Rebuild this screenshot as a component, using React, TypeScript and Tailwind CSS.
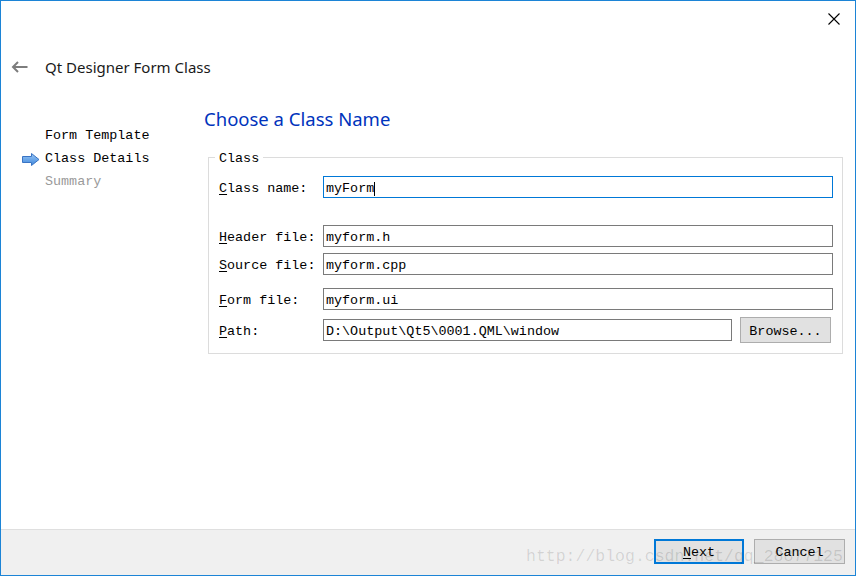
import React from "react";

const mono = "font-['Liberation_Mono',monospace]";

function Row({
  u,
  rest,
  value,
  focused,
  className,
  caret,
}: {
  u: string;
  rest: string;
  value: string;
  focused?: boolean;
  className?: string;
  caret?: boolean;
}) {
  return (
    <div className={`flex items-center h-[22px] ${className ?? ""}`}>
      <div className="w-[104px] shrink-0 leading-[16px] pt-[4px]">
        <span className="underline underline-offset-2">{u}</span>
        {rest}
      </div>
      <div
        className={`flex-1 h-[22px] border ${
          focused ? "border-[#0078d7]" : "border-[#7a7a7a]"
        } bg-white flex items-center pl-[2px] pt-[3px] leading-[16px]`}
      >
        <span>{value}</span>
        {caret && <span className="inline-block w-px h-[14px] bg-black" />}
      </div>
    </div>
  );
}

export default function App() {
  return (
    <div className="w-[856px] h-[576px] bg-white border border-[#1c84d6] flex flex-col relative overflow-hidden text-black">
      {/* close */}
      <div className="h-[36px] flex justify-end items-start pt-[12px] pr-[15px]">
        <svg width="12" height="12" viewBox="0 0 12 12">
          <path d="M0.5 0.5 L11.5 11.5 M11.5 0.5 L0.5 11.5" stroke="#000" strokeWidth="1.1" />
        </svg>
      </div>

      {/* header */}
      <div className="h-[60px] flex items-center pl-[10px]">
        <svg width="17" height="12" viewBox="0 0 17 12">
          <path d="M16.5 6 H2 M7 1 L2 6 L7 11" stroke="#7d7d7d" strokeWidth="2" fill="none" />
        </svg>
        <span className="ml-[17px] font-['Noto_Sans',sans-serif] text-[15px] text-[#1a1a1a] leading-[20px]">
          Qt Designer Form Class
        </span>
      </div>

      {/* body */}
      <div className="flex-1 flex">
        <div className={`w-[203px] shrink-0 pt-[28px] pl-[21px] ${mono} text-[13.4px]`}>
          <div className="h-[23px] flex items-center">
            <span className="w-[23px]" />
            <span>Form Template</span>
          </div>
          <div className="h-[23px] flex items-center">
            <span className="w-[23px] flex items-center">
              <svg width="18" height="13" viewBox="0 0 18 13">
                <defs>
                  <linearGradient id="ba" x1="0" y1="0" x2="0" y2="1">
                    <stop offset="0" stopColor="#9cc8f5" />
                    <stop offset="1" stopColor="#3c86dc" />
                  </linearGradient>
                </defs>
                <path
                  d="M0.5 3.5 H9.5 V0.5 L17 6.5 L9.5 12.5 V9.5 H0.5 Z"
                  fill="url(#ba)"
                  stroke="#3a74c4"
                  strokeWidth="1"
                />
              </svg>
            </span>
            <span>Class Details</span>
          </div>
          <div className="h-[23px] flex items-center text-[#9a9a9a]">
            <span className="w-[23px]" />
            <span>Summary</span>
          </div>
        </div>

        <div className="flex-1 flex flex-col pr-[12px]">
          <div className="pt-[9px] font-['Noto_Sans',sans-serif] text-[18.5px] leading-[26px] text-[#0033bc]">
            Choose a Class Name
          </div>
          <fieldset className={`mt-[17px] ml-[4px] border border-[#dcdcdc] px-[6px] pb-[10px] ${mono} text-[13.4px]`}>
            <legend className="px-[4px] leading-[16px]">
              <span className="relative top-[2px]">Class</span>
            </legend>
            <div className="pl-[4px] pr-[3px]">
              <Row u="C" rest="lass name:" value="myForm" focused caret className="mt-[11px]" />
              <Row u="H" rest="eader file:" value="myform.h" className="mt-[27px]" />
              <Row u="S" rest="ource file:" value="myform.cpp" className="mt-[6px]" />
              <Row u="F" rest="orm file:" value="myform.ui" className="mt-[13px]" />
              <div className="flex items-center mt-[7px] h-[26px]">
                <div className="w-[104px] shrink-0 leading-[16px] pt-[4px]">
                  <span className="underline underline-offset-2">P</span>ath:
                </div>
                <div className="flex-1 h-[22px] border border-[#7a7a7a] bg-white flex items-center pl-[2px] pt-[3px] leading-[16px]">
                  D:\Output\Qt5\0001.QML\window
                </div>
                <button className="ml-[8px] mr-[2px] w-[91px] h-[26px] border border-[#adadad] bg-[#e1e1e1] leading-[16px] pt-[3px]">
                  Browse...
                </button>
              </div>
            </div>
          </fieldset>
        </div>
      </div>

      {/* footer */}
      <div className={`h-[46px] border-t border-[#dfdfdf] bg-[#f0f0f0] flex justify-end items-start pt-[9px] pr-[10px] gap-[10px] ${mono} text-[13.4px]`}>
        <button className="w-[90px] h-[25px] border-2 border-[#0078d7] bg-[#e1e1e1] leading-[16px] pt-[3px]">
          <span className="underline underline-offset-2">N</span>ext
        </button>
        <button className="w-[91px] h-[25px] border border-[#adadad] bg-[#e1e1e1] leading-[16px] pt-[3px]">
          Cancel
        </button>
      </div>

      {/* watermark */}
      <div className="absolute left-[525px] top-[546px] pointer-events-none font-['Liberation_Mono',monospace] text-[16.5px] leading-[20px] text-black/[0.13] whitespace-nowrap">
        http://blog.csdn.net/qq_28877125
      </div>
    </div>
  );
}
